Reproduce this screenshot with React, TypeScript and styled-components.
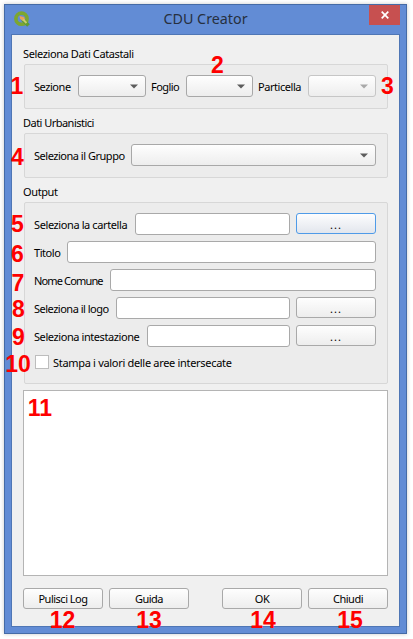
import React from "react";
import styled, { createGlobalStyle } from "styled-components";

const GlobalStyle = createGlobalStyle`
  * { box-sizing: border-box; }
  body { margin: 0; background: #fff; overflow: hidden; font: 11px/16px "Noto Sans", sans-serif; color: #000; }
`;

const Page = styled.div`
  position: relative;
  width: 413px;
  height: 639px;
  padding: 4px;
`;

const Window = styled.div`
  width: 403px;
  height: 630px;
  border: 1px solid #456ba6;
  background: #628cd5;
  box-shadow: 0 0 4px rgba(0, 0, 0, 0.22);
  padding: 0 6px 6px;
`;

const TitleBar = styled.header`
  height: 29px;
  display: grid;
  grid-template-columns: 31px 1fr 31px;
  align-items: start;

  svg { display: block; }
`;

const AppIcon = styled.svg`
  margin: 6px 0 0 3px;
`;

const Title = styled.h1`
  margin: 3px 0 0;
  text-align: center;
  font: 14.3px/22px "Noto Sans", sans-serif;
  color: #27303f;
`;

const CloseButton = styled.button`
  width: 31px;
  height: 20px;
  padding: 0;
  border: 0;
  background: #c75050;
  display: grid;
  place-items: center;
`;

const Content = styled.main`
  height: 593px;
  border: 1px solid #4f76b5;
  background: #f0f0f0;
  padding: 10px 11px 0;
`;

const GroupTitle = styled.h2<{ $spacing?: number }>`
  margin: 0;
  height: 19px;
  padding-top: 1px;
  font-size: 11px;
  font-weight: 400;
  line-height: 16px;
  letter-spacing: ${(p) => p.$spacing ?? -0.38}px;
`;

const Group = styled.section<{ $height: number; $gap?: number }>`
  height: ${(p) => p.$height}px;
  margin: 0 0 ${(p) => p.$gap ?? 5}px 1px;
  padding: 10px 11px 0 9px;
  border: 1px solid #d7d7d7;
  border-radius: 2px;
  background: #ececec;
`;

const Row = styled.div`
  display: flex;
  height: 22px;
  margin-bottom: 6px;
`;

const Label = styled.label<{ $width: number; $spacing?: number }>`
  flex: 0 0 ${(p) => p.$width}px;
  min-width: 0;
  line-height: 23px;
  white-space: nowrap;
  letter-spacing: ${(p) => p.$spacing ?? -0.45}px;
`;

const Select = styled.div<{ $width?: number; $gap?: number; $disabled?: boolean }>`
  flex: ${(p) => (p.$width ? `0 0 ${p.$width}px` : "1")};
  margin-right: ${(p) => p.$gap ?? 0}px;
  display: flex;
  align-items: center;
  justify-content: flex-end;
  padding: 0 7px 0 0;
  border: 1px solid ${(p) => (p.$disabled ? "#c6c6c6" : "#a8a8a8")};
  border-radius: 3px;
  background: linear-gradient(#fefefe, #ededed);
  color: ${(p) => (p.$disabled ? "#a9a9a9" : "#5c5c5c")};
`;

const Field = styled.input`
  flex: 1;
  min-width: 0;
  border: 1px solid #a9a9a9;
  border-radius: 3px;
  background: #fff;
  outline: 0;
`;

const Button = styled.button<{ $focused?: boolean; $dots?: boolean }>`
  width: 80px;
  height: 21px;
  padding: ${(p) => (p.$dots ? "3px" : "1px")} 0 0;
  border: 1px solid ${(p) => (p.$focused ? "#4f9be8" : "#a9a9a9")};
  border-radius: 3px;
  background: ${(p) =>
    p.$focused ? "linear-gradient(#fdfdfe, #e2e6ed)" : "linear-gradient(#fefefe, #ededed)"};
  font: inherit;
  color: inherit;
  letter-spacing: ${(p) => (p.$dots ? "1px" : "-0.5px")};
  line-height: 16px;
`;

const BrowseButton = styled(Button)`
  margin-left: 6px;
`;

const CheckRow = styled.div`
  display: flex;
  align-items: center;
  gap: 4px;
  margin: 8px 0 0 1px;
  height: 14px;
  line-height: 14px;
  white-space: nowrap;
  letter-spacing: -0.31px;
`;

const CheckBox = styled.span`
  width: 14px;
  height: 14px;
  border: 1px solid #bdbdbd;
  background: #fff;
`;

const CheckText = styled.span`
  padding-top: 2px;
`;

const Log = styled.div`
  height: 186px;
  border: 1px solid #b4b4b4;
  background: #fff;
`;

const Actions = styled.footer`
  display: flex;
  gap: 6px;
  margin-top: 12px;
`;

const Spacer = styled.div`
  flex: 1;
`;

const Marker = styled.span<{ $x: number; $y: number }>`
  position: absolute;
  left: ${(p) => p.$x}px;
  top: ${(p) => p.$y}px;
  transform: translate(-50%, -50%);
  font: bold 23px/23px "Liberation Sans", Arial, sans-serif;
  color: #fe0000;
`;

const markers: [number, number][] = [
  [17, 86], [217.5, 65], [387.5, 86], [17.5, 157], [17.5, 224],
  [17.5, 254], [18, 283], [18.5, 309], [18.5, 337], [18, 364],
  [40, 408], [62.5, 620], [149, 620], [263, 620], [350, 620],
];

const Arrow = () => (
  <svg width="8" height="5" viewBox="0 0 8 5">
    <path d="M0 0.5h8L4 4.5z" fill="currentColor" />
  </svg>
);

export default function App() {
  return (
    <Page>
      <GlobalStyle />
      <Window>
        <TitleBar>
          <AppIcon width="17" height="16" viewBox="0 0 17 16">
            <circle cx="7.5" cy="7.7" r="5.6" fill="none" stroke="#7da62f" strokeWidth="3.6" />
            <path d="M8.5 8.5l6 6" stroke="#5f9b32" strokeWidth="3.8" />
            <path d="M5.5 5l4.5.9 1.3 3.6-2.8.2-2.4-2z" fill="#eda257" />
            <path d="M9 8.5l3.5 3.5" stroke="#c9cf70" strokeWidth="2" />
          </AppIcon>
          <Title>CDU Creator</Title>
          <CloseButton aria-label="Chiudi">
            <svg width="8" height="8" viewBox="0 0 8 8">
              <path d="M0.7 0.7l6.6 6.6M7.3 0.7L0.7 7.3" stroke="#fff" strokeWidth="1.7" />
            </svg>
          </CloseButton>
        </TitleBar>
        <Content>
          <GroupTitle>Seleziona Dati Catastali</GroupTitle>
          <Group $height={45}>
            <Row>
              <Label $width={44}>Sezione</Label>
              <Select $width={68} $gap={5}><Arrow /></Select>
              <Label $width={35} $spacing={-0.55}>Foglio</Label>
              <Select $width={67} $gap={5}><Arrow /></Select>
              <Label $width={50}>Particella</Label>
              <Select $disabled><Arrow /></Select>
            </Row>
          </Group>
          <GroupTitle $spacing={-0.53}>Dati Urbanistici</GroupTitle>
          <Group $height={45}>
            <Row>
              <Label $width={97} $spacing={-0.48}>Seleziona il Gruppo</Label>
              <Select><Arrow /></Select>
            </Row>
          </Group>
          <GroupTitle>Output</GroupTitle>
          <Group $height={182} $gap={6}>
            <Row>
              <Label $width={101} $spacing={-0.4}>Seleziona la cartella</Label>
              <Field />
              <BrowseButton $focused $dots>...</BrowseButton>
            </Row>
            <Row>
              <Label $width={33}>Titolo</Label>
              <Field />
            </Row>
            <Row>
              <Label $width={76} $spacing={-0.85}>Nome Comune</Label>
              <Field />
            </Row>
            <Row>
              <Label $width={82} $spacing={-0.5}>Seleziona il logo</Label>
              <Field />
              <BrowseButton $dots>...</BrowseButton>
            </Row>
            <Row>
              <Label $width={113} $spacing={-0.42}>Seleziona intestazione</Label>
              <Field />
              <BrowseButton $dots>...</BrowseButton>
            </Row>
            <CheckRow>
              <CheckBox />
              <CheckText>Stampa i valori delle aree intersecate</CheckText>
            </CheckRow>
          </Group>
          <Log />
          <Actions>
            <Button>Pulisci Log</Button>
            <Button>Guida</Button>
            <Spacer />
            <Button>OK</Button>
            <Button>Chiudi</Button>
          </Actions>
        </Content>
      </Window>
      {markers.map(([x, y], i) => (
        <Marker key={i} $x={x} $y={y}>{i + 1}</Marker>
      ))}
    </Page>
  );
}
